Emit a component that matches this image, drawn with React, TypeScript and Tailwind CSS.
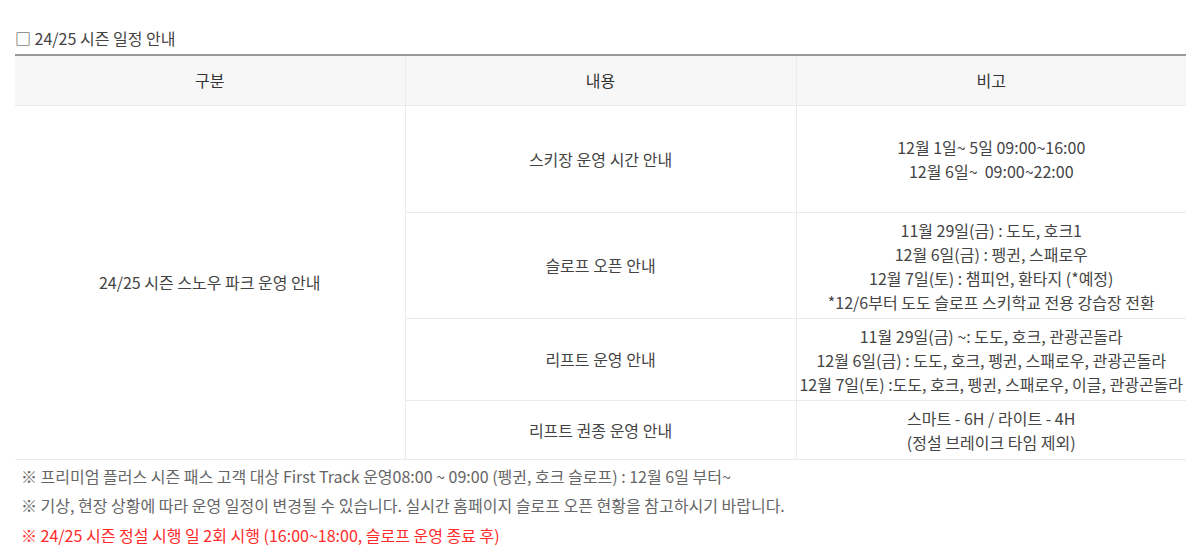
const font = { fontFamily: '"Noto Sans CJK KR", "Noto Sans", sans-serif' };

const rows = [
  {
    title: "스키장 운영 시간 안내",
    height: "h-[107px]",
    lines: ["12월 1일~ 5일 09:00~16:00", "12월 6일~  09:00~22:00"],
  },
  {
    title: "슬로프 오픈 안내",
    height: "h-[106px]",
    lines: [
      "11월 29일(금) : 도도, 호크1",
      "12월 6일(금) : 펭귄, 스패로우",
      "12월 7일(토) : 챔피언, 환타지 (*예정)",
      "*12/6부터 도도 슬로프 스키학교 전용 강습장 전환",
    ],
  },
  {
    title: "리프트 운영 안내",
    height: "h-[82px]",
    lines: [
      "11월 29일(금) ~: 도도, 호크, 관광곤돌라",
      "12월 6일(금) : 도도, 호크, 펭귄, 스패로우, 관광곤돌라",
      "12월 7일(토) :도도, 호크, 펭귄, 스패로우, 이글, 관광곤돌라",
    ],
  },
  {
    title: "리프트 권종 운영 안내",
    height: "h-[59px]",
    lines: ["스마트 - 6H / 라이트 - 4H", "(정설 브레이크 타임 제외)"],
  },
];

export default function App() {
  return (
    <div className="w-[1200px] h-[548px] overflow-hidden bg-white pl-[15px] pr-[14px] pt-[26px] text-[16px] text-[#444]" style={font}>
      <h3 className="leading-6 font-normal text-[#444] mb-[4px]">□ 24/25 시즌 일정 안내</h3>

      <table className="w-full border-collapse border-t-2 border-t-[#999] table-fixed">
        <colgroup>
          <col className="w-[390px]" />
          <col className="w-[391px]" />
          <col />
        </colgroup>
        <thead>
          <tr className="h-[50px] bg-[#f7f7f7] border-b border-[#ebebeb] text-[#333]">
            <th className="font-normal border-r border-[#ebebeb]">구분</th>
            <th className="font-normal border-r border-[#ebebeb]">내용</th>
            <th className="font-normal">비고</th>
          </tr>
        </thead>
        <tbody>
          {rows.map((row, i) => (
            <tr key={row.title} className={`${row.height} border-b border-[#ebebeb]`}>
              {i === 0 && (
                <td rowSpan={4} className="text-center border-r border-[#ebebeb]">
                  24/25 시즌 스노우 파크 운영 안내
                </td>
              )}
              <td className="text-center border-r border-[#ebebeb]">{row.title}</td>
              <td className="text-center leading-6 pt-[5px] pb-[4px]">
                {row.lines.map((l) => (
                  <div key={l} className="whitespace-pre">{l}</div>
                ))}
              </td>
            </tr>
          ))}
        </tbody>
      </table>

      <div className="mt-[2px] pl-[6px] leading-[29.5px] text-[#666]">
        <p>※ 프리미엄 플러스 시즌 패스 고객 대상 First Track 운영08:00 ~ 09:00 (펭귄, 호크 슬로프) : 12월 6일 부터~</p>
        <p>※ 기상, 현장 상황에 따라 운영 일정이 변경될 수 있습니다. 실시간 홈페이지 슬로프 오픈 현황을 참고하시기 바랍니다.</p>
        <p className="text-[#ff2a2a]">※ 24/25 시즌 정설 시행 일 2회 시행 (16:00~18:00, 슬로프 운영 종료 후)</p>
      </div>
    </div>
  );
}
